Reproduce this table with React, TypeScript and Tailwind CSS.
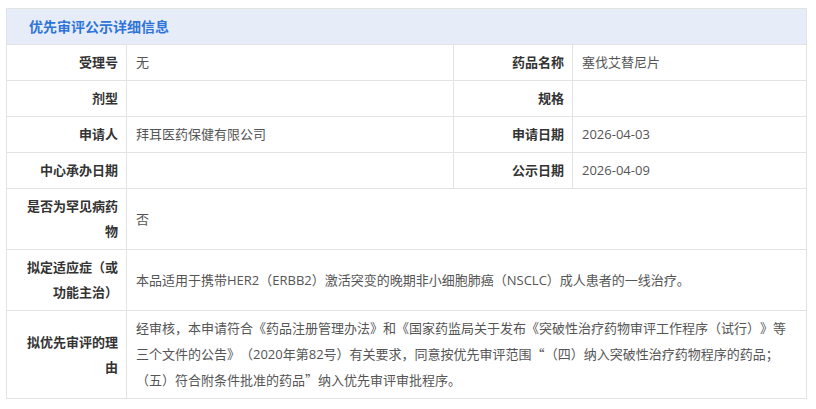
import React from 'react';

const font = { fontFamily: '"Open Sans", "Noto Sans CJK SC", sans-serif' };

const Label: React.FC<{ children?: React.ReactNode }> = ({ children }) => (
  <td className="border border-[#e3e3e3] pl-5 pr-2 py-[5px] text-right align-middle font-bold text-[#333] text-[13px] leading-[25px]">
    {children}
  </td>
);

const Value: React.FC<{ children?: React.ReactNode; colSpan?: number }> = ({ children, colSpan }) => (
  <td
    colSpan={colSpan}
    className="border border-[#e3e3e3] pl-[9px] pr-[15px] py-[5px] text-left align-middle text-[#555] text-[13px] leading-[25px]"
  >
    {children}
  </td>
);

// full-width quotes come from the CJK face
const Q: React.FC<{ children: React.ReactNode }> = ({ children }) => (
  <span className="font-['Noto_Sans_CJK_SC',sans-serif]">{children}</span>
);

const App: React.FC = () => {
  return (
    <div className="w-[816px] h-[409px] bg-white pt-2 pl-[6px] [text-spacing-trim:space-all]" style={font}>
      <table className="w-[800px] table-fixed border-collapse">
        <colgroup>
          <col className="w-[120px]" />
          <col className="w-[327px]" />
          <col className="w-[119px]" />
          <col className="w-[234px]" />
        </colgroup>
        <tbody>
          {/* Header */}
          <tr>
            <td
              colSpan={4}
              className="border border-[#e3e3e3] bg-[#e7edf8] h-[36px] pl-[22px] text-[14px] font-bold text-[#2f74d9] leading-[35px]"
            >
              优先审评公示详细信息
            </td>
          </tr>
          <tr>
            <Label>受理号</Label>
            <Value>无</Value>
            <Label>药品名称</Label>
            <Value>塞伐艾替尼片</Value>
          </tr>
          <tr>
            <Label>剂型</Label>
            <Value></Value>
            <Label>规格</Label>
            <Value></Value>
          </tr>
          <tr>
            <Label>申请人</Label>
            <Value>拜耳医药保健有限公司</Value>
            <Label>申请日期</Label>
            <Value>2026-04-03</Value>
          </tr>
          <tr>
            <Label>中心承办日期</Label>
            <Value></Value>
            <Label>公示日期</Label>
            <Value>2026-04-09</Value>
          </tr>
          <tr>
            <Label>是否为罕见病药物</Label>
            <Value colSpan={3}>否</Value>
          </tr>
          <tr>
            <Label>拟定适应症（或功能主治）</Label>
            <Value colSpan={3}>
              本品适用于携带HER2（ERBB2）激活突变的晚期非小细胞肺癌（NSCLC）成人患者的一线治疗。
            </Value>
          </tr>
          <tr>
            <Label>拟优先审评的理由</Label>
            <Value colSpan={3}>
              经审核，本申请符合《药品注册管理办法》和《国家药监局关于发布《突破性治疗药物审评工作程序（试行）》等三个文件的公告》（2020年第82号）有关要求，同意按优先审评范围<Q>“</Q>（四）纳入突破性治疗药物程序的药品；（五）符合附条件批准的药品<Q>”</Q>纳入优先审评审批程序。
            </Value>
          </tr>
        </tbody>
      </table>
    </div>
  );
};

export default App;
